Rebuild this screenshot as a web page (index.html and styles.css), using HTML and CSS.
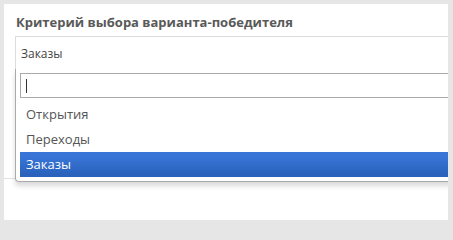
FILE: index.html
```html
<!DOCTYPE html>
<html lang="ru">
<head>
<meta charset="utf-8">
<title>Критерий выбора</title>
<link rel="stylesheet" href="styles.css">
</head>
<body>
<div class="panel">
  <div class="section">
    <div class="title">Критерий выбора варианта-победителя</div>
    <div class="select">
      <div class="single">Заказы</div>
      <div class="drop">
        <div class="search"><div class="input"><span class="caret"></span></div></div>
        <ul class="results">
          <li class="item">Открытия</li>
          <li class="item">Переходы</li>
          <li class="item active">Заказы</li>
        </ul>
      </div>
    </div>
  </div>
</div>
</body>
</html>
```
FILE: styles.css
```css
html, body {
  margin: 0;
  padding: 0;
  overflow: hidden;
}
html {
  height: 224px;
  background: #e6e6e6;
}
body {
  background: #e6e6e6;
  padding: 4px 5px 4px 4px;
  height: 224px;
  box-sizing: border-box;
  font-family: "Open Sans", "DejaVu Sans", sans-serif;
}
.panel {
  background: #fff;
  height: 216px;
  overflow: hidden;
}
.section {
  height: 175px;
  border-bottom: 1px solid #e3e3e3;
  padding-top: 9px;
  box-sizing: border-box;
}
.title {
  margin-left: 12px;
  font-size: 13px;
  line-height: 18px;
  font-weight: 700;
  color: #595959;
}
.select {
  position: relative;
  margin: 5px -30px 0 11px;
}
.single {
  box-sizing: border-box;
  height: 33px;
  border: 1px solid #dcdcdc;
  border-bottom: 0;
  padding: 9px 0 0 5px;
  font-size: 12px;
  line-height: 16px;
  color: #444;
}
.drop {
  position: absolute;
  top: 100%;
  left: 0;
  right: 0;
  background: #fff;
  border: 1px solid #aaa;
  border-top: 0;
  border-bottom-left-radius: 4px;
  box-shadow: 0 4px 5px rgba(0, 0, 0, 0.15);
}
.search {
  padding: 3px 4px;
}
.input {
  box-sizing: border-box;
  height: 25px;
  margin: 1px 0;
  border: 1px solid #aaa;
  padding: 4px 5px;
}
.caret {
  display: block;
  width: 1px;
  height: 14px;
  margin-top: 1px;
  background: #333;
}
.results {
  list-style: none;
  margin: 0 4px 4px 0;
  padding: 0 0 0 4px;
}
.item {
  padding: 5px 6px;
  line-height: 15px;
  font-size: 13px;
  color: #555;
}
.item.active {
  color: #fff;
  background-color: #3875d7;
  background-image: linear-gradient(#3875d7 20%, #2a62bc 90%);
}
```
